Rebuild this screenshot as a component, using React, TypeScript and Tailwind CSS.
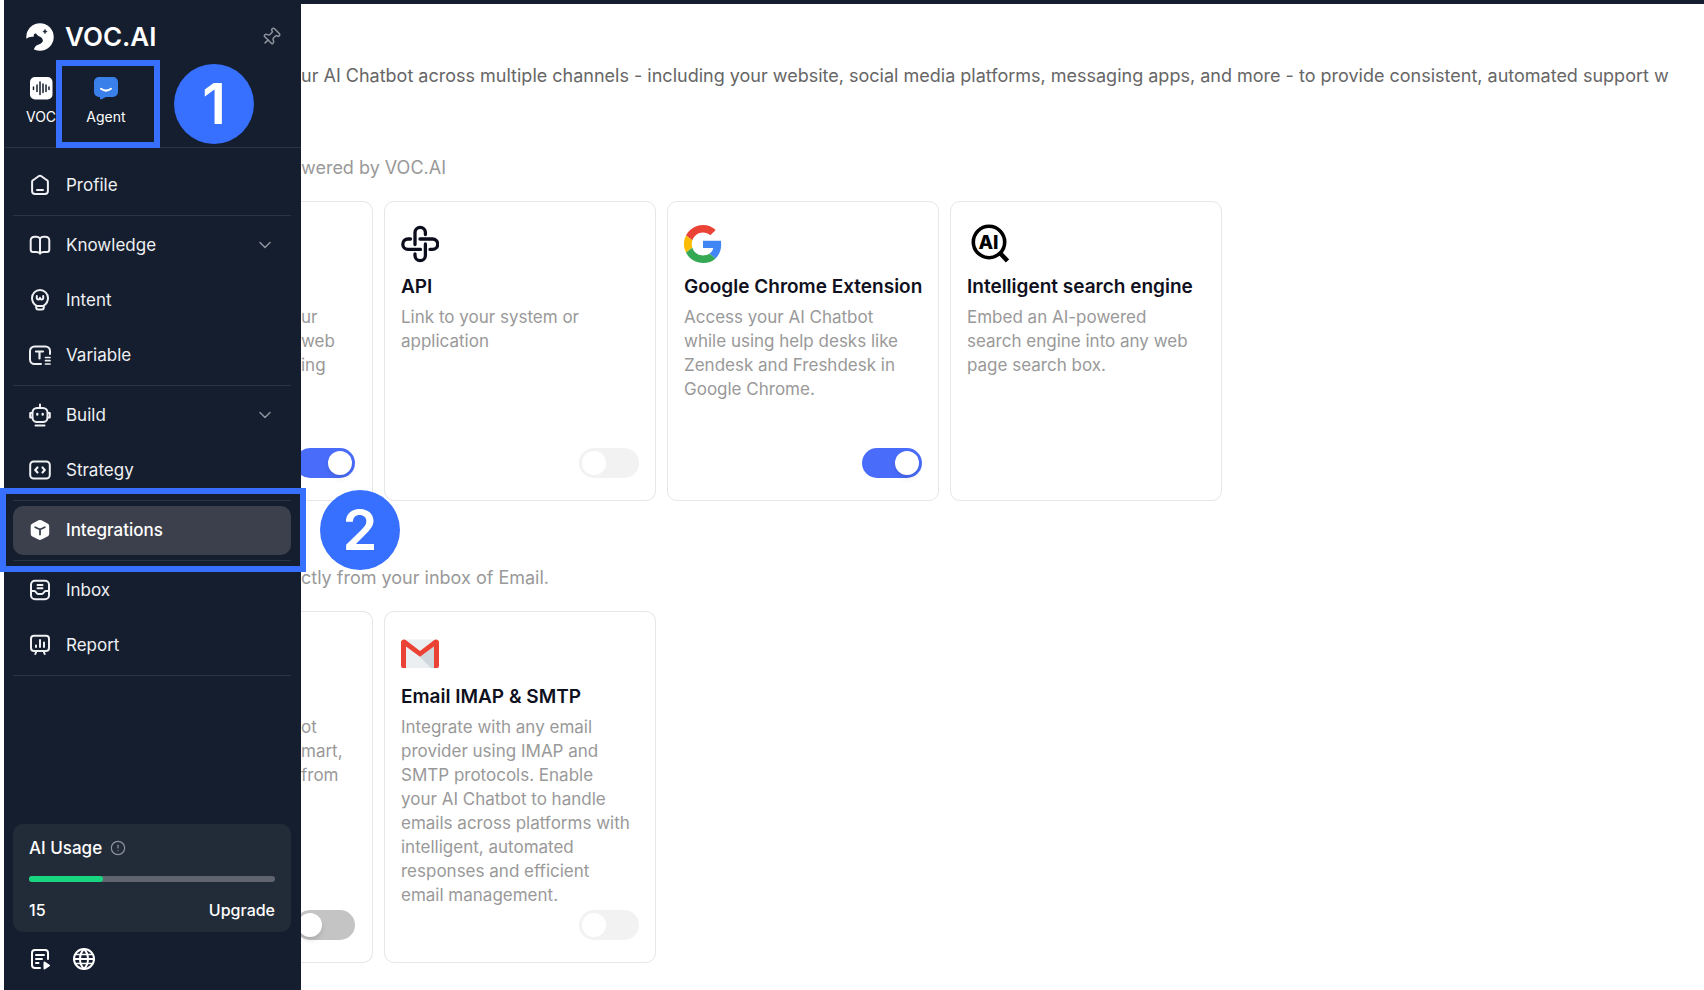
import React from "react";
import { ChevronDown, CircleAlert, Globe, Pin } from "lucide-react";

type IconProps = { children: React.ReactNode };

const LineIcon: React.FC<IconProps> = ({ children }) => (
  <svg
    viewBox="0 0 24 24"
    className="mb-[2px] h-6 w-6 shrink-0"
    fill="none"
    stroke="currentColor"
    strokeWidth="2"
    strokeLinecap="round"
    strokeLinejoin="round"
    aria-hidden="true"
  >
    {children}
  </svg>
);

const icons = {
  profile: (
    <LineIcon>
      <path d="M10.6 3.2 5 7.2a2 2 0 0 0-.9 1.7V18a3 3 0 0 0 3 3h9.8a3 3 0 0 0 3-3V8.9a2 2 0 0 0-.9-1.7l-5.6-4a2.5 2.5 0 0 0-2.8 0Z" />
      <path d="M9 17h6" />
    </LineIcon>
  ),
  knowledge: (
    <LineIcon>
      <path d="M12 5.5C11 4.3 9.8 3.8 8.3 3.8H7C4 3.8 2.7 5 2.7 7.5v9c0 1.8.8 2.5 2.5 2.5H8c1.800 0 3.200.3 4 1.5.8-1.200 2.200-1.500 4-1.500h2.800c1.700 0 2.500-.7 2.500-2.500v-9c0-2.500-1.300-3.700-4.300-3.700h-1.300c-1.500 0-2.700.5-3.700 1.700Z" />
      <path d="M12 5.5v15" />
    </LineIcon>
  ),
  intent: (
    <LineIcon>
      <path d="M8.2 17.6C5.6 15.8 4 13.2 4 10a8 8 0 0 1 16 0c0 3.200-1.600 5.800-4.200 7.600v1.900c0 1.300-.7 2-2 2h-3.600c-1.300 0-2-.7-2-2Z" />
      <path d="M8.5 18h7" />
      <path d="M8.8 8v1.800a1.600 1.600 0 0 0 3.200 0 1.600 1.600 0 0 0 3.200 0V8" />
    </LineIcon>
  ),
  variable: (
    <LineIcon>
      <path d="M22 11V8a4.500 4.500 0 0 0-4.500-4.500h-11A4.500 4.500 0 0 0 2 8v8.500A4.500 4.500 0 0 0 6.500 21H13" />
      <path d="M8 8.500h7M11.500 8.500v7" strokeWidth="2.2" />
      <path d="M17.500 14.500H22M17.500 17.700H22M17.500 21H22" strokeWidth="1.7" />
    </LineIcon>
  ),
  build: (
    <LineIcon>
      <path d="M12 5V1.500M7.500 22.500h9M4.300 10H2.200v4.500h2.100M19.700 10h2.100v4.500h-2.100" />
      <rect x="4.5" y="5" width="15" height="14" rx="4.5" />
      <path d="M9.300 11v.5M14.700 11v.5" strokeWidth="2.4" />
    </LineIcon>
  ),
  strategy: (
    <LineIcon>
      <rect x="2.2" y="3.5" width="19.6" height="17" rx="3.5" />
      <path d="m9.500 9.500-2.300 2.500 2.300 2.500M14.500 9.500l2.300 2.500-2.300 2.500" strokeWidth="2.2" />
    </LineIcon>
  ),
  integrations: (
    <LineIcon>
      <path
        d="m10.500 2.300-6 3.100A3 3 0 0 0 2.700 8v8a3 3 0 0 0 1.700 2.600l6 3a3.200 3.200 0 0 0 3 0l6-3a3 3 0 0 0 1.800-2.600V8a3 3 0 0 0-1.700-2.600l-6-3.100a3.200 3.200 0 0 0-3 0Z"
        fill="currentColor"
        stroke="none"
      />
      <path d="m7.200 9.300 4.800 2.200 4.800-2.200M12 11.500v5" stroke="#3c404c" strokeWidth="1.8" />
    </LineIcon>
  ),
  inbox: (
    <LineIcon>
      <rect x="3" y="2.8" width="18" height="18.4" rx="4" />
      <path d="M3 13h3.500c1.500 0 1.500 3 3.500 3h4c2 0 2-3 3.500-3H21M9.500 7h5M9.500 10.300h5" />
    </LineIcon>
  ),
  report: (
    <LineIcon>
      <rect x="3" y="2.8" width="18" height="15.2" rx="3" />
      <path d="M8.300 18.500 7.300 21M15.700 18.500l1 2.500M8 12.500v1.500M12 7v7M16 9.500V14" />
    </LineIcon>
  ),
};

const sections = [
  [{ label: "Profile", icon: icons.profile }],
  [
    { label: "Knowledge", icon: icons.knowledge, expandable: true },
    { label: "Intent", icon: icons.intent },
    { label: "Variable", icon: icons.variable },
  ],
  [
    { label: "Build", icon: icons.build, expandable: true },
    { label: "Strategy", icon: icons.strategy },
  ],
  [{ label: "Integrations", icon: icons.integrations, active: true }],
  [
    { label: "Inbox", icon: icons.inbox },
    { label: "Report", icon: icons.report },
  ],
] as { label: string; icon: React.ReactNode; expandable?: boolean; active?: boolean }[][];

const Logo = () => (
  <svg viewBox="0 0 28 28" className="h-7 w-7" aria-hidden="true">
    <circle cx="14" cy="14" r="13.7" fill="#fff" />
    <path
      d="M-1 16.500C1.500 15 3.500 13.800 6 13.800c1.500 0 2-.4 1.800-1.600-.1-1 .8-1.700 2.200-1.700 1 1.700 2.500 2.500 4.100 3.300 2.200 1.200 3.200 2.900 2.600 4.700-.8 2.200-3.400 2.700-5.400 3.500-1.800.7-2.600 2.300-3.500 4.500L-1 28Z"
      fill="#151e2e"
    />
    <path d="m19 6.300.6 1.600 1.600.6-1.600.6-.6 1.600-.6-1.600-1.600-.6 1.600-.6Z" fill="#151e2e" stroke="#151e2e" strokeWidth=".6" />
  </svg>
);

const ApiIcon = () => (
  <svg viewBox="0 0 38 38" className="h-[38px] w-[38px]" fill="none" stroke="#0b0d1c" strokeWidth="3.3" strokeLinecap="round" aria-hidden="true">
    <path d="M14 19.500V7.500a5.200 5.200 0 0 1 10.400 0V9.500" />
    <path d="M19 14h12.500a5.200 5.200 0 0 1 0 10.400H29" />
    <path d="M24.400 19v11.500a5.200 5.200 0 0 1-10.400 0V29" />
    <path d="M19.500 24.400H7A5.200 5.200 0 0 1 7 14h2.500" />
  </svg>
);

const GoogleIcon = () => (
  <svg viewBox="0 0 48 48" className="h-[38px] w-[38px]" aria-hidden="true">
    <path fill="#ea4335" d="M24 9.500c3.540 0 6.710 1.220 9.210 3.600l6.850-6.850C35.900 2.380 30.470 0 24 0 14.620 0 6.510 5.380 2.560 13.220l7.980 6.190C12.430 13.720 17.740 9.500 24 9.500Z" />
    <path fill="#4285f4" d="M46.980 24.550c0-1.570-.15-3.090-.38-4.550H24v9.020h12.940c-.58 2.960-2.260 5.480-4.780 7.180l7.730 6c4.510-4.180 7.090-10.360 7.090-17.650Z" />
    <path fill="#fbbc05" d="M10.530 28.590a14.500 14.500 0 0 1 0-9.180l-7.980-6.190a24 24 0 0 0 0 21.560l7.980-6.190Z" />
    <path fill="#34a853" d="M24 48c6.480 0 11.930-2.130 15.890-5.810l-7.730-6c-2.150 1.450-4.920 2.300-8.160 2.300-6.260 0-11.570-4.220-13.470-9.910l-7.980 6.190C6.510 42.620 14.620 48 24 48Z" />
  </svg>
);

const AiSearchIcon = () => (
  <svg viewBox="0 0 42 40" className="h-10 w-[42px]" aria-hidden="true">
    <circle cx="22" cy="18" r="15.7" fill="none" stroke="#000" strokeWidth="3.6" />
    <path d="m32.500 28.500 8 8.500" stroke="#000" strokeWidth="4.5" />
    <text x="21.5" y="24.5" textAnchor="middle" fontFamily="Inter" fontWeight="800" fontSize="19">
      AI
    </text>
  </svg>
);

const GmailIcon = () => (
  <svg viewBox="0 0 38 38" className="h-[38px] w-[38px]" aria-hidden="true">
    <path d="M2 4.500h34V33H2Z" fill="#eceff1" />
    <path d="M19 22 34 11v22h-4Z" fill="#cfd8dc" />
    <path d="M0 7A3 3 0 0 1 4.700 5.100L19 16 33.300 5.100A3 3 0 0 1 38 7v24a2 2 0 0 1-2 2h-3V11.500L19 21.800 5 11.500V33H2a2 2 0 0 1-2-2Z" fill="#ea4335" />
  </svg>
);

type ToggleProps = { label: string; on?: boolean; disabled?: boolean };

const Toggle: React.FC<ToggleProps> = ({ label, on, disabled }) => (
  <input
    type="checkbox"
    role="switch"
    aria-label={label}
    defaultChecked={on}
    disabled={disabled}
    className="h-[30px] w-[60px] shrink-0 appearance-none rounded-full bg-[#c4c4c4] p-[3px] before:block before:h-6 before:w-6 before:rounded-full before:bg-white before:shadow-md checked:bg-[#4a6cfa] checked:before:ml-[30px] disabled:bg-[#f2f2f2] disabled:before:shadow-none"
  />
);

type CardProps = {
  icon: React.ReactNode;
  title: string;
  text: string;
  toggle?: React.ReactNode;
};

const Card: React.FC<CardProps> = ({ icon, title, text, toggle }) => (
  <article className="flex w-[272px] shrink-0 flex-col rounded-[10px] border border-[#e6e6e6] px-4 pt-[22px] pb-[22px]">
    <div className="flex h-10 items-center">{icon}</div>
    <h3 className="mt-[9px] text-[19px] leading-7 font-semibold whitespace-nowrap text-[#0f1020]">{title}</h3>
    <p className="mt-1 max-w-[231px] text-[17px] leading-6 text-[#999]">{text}</p>
    <div className="mt-auto flex justify-end">{toggle}</div>
  </article>
);

// card that is partly scrolled under the sidebar
const CutCard: React.FC<{ lines: string[]; toggle: React.ReactNode }> = ({ lines, toggle }) => (
  <article className="flex w-[72px] shrink-0 flex-col overflow-hidden rounded-r-[10px] border border-l-0 border-[#e6e6e6] pt-[103px] pr-[17px] pb-[22px]">
    <div className="text-[17px] leading-6 whitespace-nowrap text-[#999]">
      {lines.map((line) => (
        <p key={line}>{line}</p>
      ))}
    </div>
    <div className="mt-auto flex justify-end">{toggle}</div>
  </article>
);

const Sidebar = () => (
  <aside className="flex w-[297px] shrink-0 flex-col bg-[#151e2e] text-white">
    <header className="h-[148px] border-b border-[#2a3341] px-[22px] pt-[18px]">
      <div className="flex h-[38px] items-center">
        <Logo />
        <span className="ml-[11px] text-[26px] leading-none font-semibold">VOC.AI</span>
        <button aria-label="Pin sidebar" className="mr-[-2px] ml-auto text-[#8d939d]">
          <Pin className="h-5 w-5 rotate-45" strokeWidth={1.8} />
        </button>
      </div>
      <div className="mt-5 flex gap-[30px] text-[14px] leading-5">
        <button className="flex w-[30px] flex-col items-center gap-[7px]">
          <svg viewBox="0 0 24 24" className="h-6 w-6" aria-hidden="true">
            <rect x="1" y="1" width="22.5" height="22.5" rx="5" fill="#fff" />
            <path d="M4.500 11v2.500M8 9v6.500M11 6v12.500M14 8v8.500M17 9v6.500M20 11v2.500" stroke="#151e2e" strokeWidth="1.5" strokeLinecap="round" />
          </svg>
          VOC
        </button>
        <button className="flex w-10 flex-col items-center gap-[7px]">
          <svg viewBox="0 0 24 24" className="h-6 w-6" aria-hidden="true">
            <path d="M5 1h14a5 5 0 0 1 5 5v10a5 5 0 0 1-5 5h-7l-4.500 2.300c-1 .5-1.500 0-1.500-1V21H5a5 5 0 0 1-5-5V6a5 5 0 0 1 5-5Z" fill="#3a80ea" />
            <path d="M7 12.800c3 2.200 7 2.200 10 0" fill="none" stroke="#fff" strokeWidth="2" strokeLinecap="round" />
          </svg>
          Agent
        </button>
      </div>
    </header>

    <nav className="pt-2 pr-[10px] pl-[9px]">
      {sections.map((items) => (
        <ul key={items[0].label} className="flex flex-col gap-[6px] border-b border-[#2a3341] py-[5px]">
          {items.map((item) => (
            <li key={item.label}>
              <a
                href="#"
                aria-current={item.active ? "page" : undefined}
                className={
                  item.active
                    ? "flex h-[49px] items-center gap-[14px] rounded-[10px] bg-[#3c404c] pr-4 pl-[15px] text-[17px] font-medium"
                    : "flex h-[49px] items-center gap-[14px] rounded-[10px] pr-4 pl-[15px] text-[17px] text-[#eef0f3]"
                }
              >
                {item.icon}
                {item.label}
                {item.expandable && <ChevronDown className="mb-[2px] ml-auto h-5 w-5 text-[#8d939d]" strokeWidth={1.8} />}
              </a>
            </li>
          ))}
        </ul>
      ))}
    </nav>

    <section className="mt-auto mr-[10px] ml-[9px] rounded-[10px] bg-[#222c38] px-4 pt-3 pb-[10px]">
      <h2 className="flex items-center gap-2 text-[17px] leading-6 font-medium">
        AI Usage
        <CircleAlert className="h-4 w-4 text-[#8d939d]" strokeWidth={1.8} />
      </h2>
      <div className="mt-4 h-[6px] rounded-full bg-[#5f646f]">
        <div className="h-full w-[30%] rounded-full bg-[#17d67f]" />
      </div>
      <div className="mt-4 flex justify-between text-[16px] leading-6 font-medium">
        <span>15</span>
        <a href="#">Upgrade</a>
      </div>
    </section>

    <footer className="flex gap-5 px-6 pt-[15px] pb-[18px]">
      <button aria-label="Tutorials">
        <LineIcon>
          <path d="M20 12V6a3 3 0 0 0-3-3H7a3 3 0 0 0-3 3v12a3 3 0 0 0 3 3h5M8 8h8M8 12h6M8 16h2.500" />
          <path d="m16.500 15.500 4.500 3-4.500 3Z" fill="currentColor" />
        </LineIcon>
      </button>
      <button aria-label="Language">
        <LineIcon>
          <Globe strokeWidth={2} />
          <path d="M4.500 7.500h15M4.500 16.500h15" strokeWidth="1.7" />
        </LineIcon>
      </button>
    </footer>
  </aside>
);

export default function App() {
  return (
    <div className="relative flex min-h-screen overflow-hidden bg-white pl-1 font-['Inter',sans-serif]">
      <Sidebar />

      <main className="min-w-0 flex-1 overflow-hidden border-t-4 border-[#151e2e] pb-7">
        <p className="mt-[59px] text-[18px] leading-[26px] whitespace-nowrap text-[#666]">
          ur AI Chatbot across multiple channels - including your website, social media platforms, messaging apps, and
          more - to provide consistent, automated support w
        </p>

        <h2 className="mt-[66px] text-[18px] leading-[26px] text-[#999]">wered by VOC.AI</h2>
        <div className="mt-5 flex min-h-[300px] gap-[11px]">
          <CutCard lines={["ur", "web", "ing"]} toggle={<Toggle label="Website" on />} />
          <Card icon={<ApiIcon />} title="API" text="Link to your system or application" toggle={<Toggle label="API" disabled />} />
          <Card
            icon={<GoogleIcon />}
            title="Google Chrome Extension"
            text="Access your AI Chatbot while using help desks like Zendesk and Freshdesk in Google Chrome."
            toggle={<Toggle label="Google Chrome Extension" on />}
          />
          <Card
            icon={<AiSearchIcon />}
            title="Intelligent search engine"
            text="Embed an AI-powered search engine into any web page search box."
          />
        </div>

        <h2 className="mt-16 text-[18px] leading-[26px] text-[#999]">ctly from your inbox of Email.</h2>
        <div className="mt-5 flex min-h-[352px] gap-[11px]">
          <CutCard lines={["ot", "mart,", "from"]} toggle={<Toggle label="Email" />} />
          <Card
            icon={<GmailIcon />}
            title="Email IMAP & SMTP"
            text="Integrate with any email provider using IMAP and SMTP protocols. Enable your AI Chatbot to handle emails across platforms with intelligent, automated responses and efficient email management."
            toggle={<Toggle label="Email IMAP & SMTP" disabled />}
          />
        </div>
      </main>

      {/* numbered step markers over the page */}
      <div className="pointer-events-none absolute top-[60px] left-14 h-[88px] w-[104px] border-6 border-[#376fff]" />
      <div className="absolute top-16 left-[174px] flex h-20 w-20 items-center justify-center rounded-full bg-[#376fff] text-[56px] leading-none font-semibold text-white">
        1
      </div>
      <div className="pointer-events-none absolute top-[488px] left-0 h-[84px] w-[306px] border-6 border-[#376fff]" />
      <div className="absolute top-[490px] left-80 flex h-20 w-20 items-center justify-center rounded-full bg-[#376fff] text-[56px] leading-none font-semibold text-white">
        2
      </div>
    </div>
  );
}
